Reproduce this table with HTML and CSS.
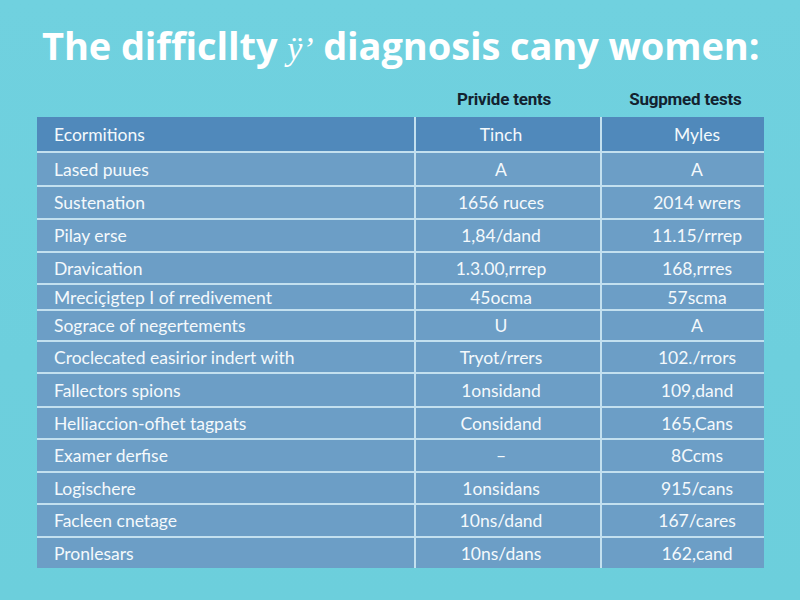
FILE: index.html
```html
<!DOCTYPE html>
<html lang="en">
<head>
<meta charset="utf-8">
<title>The difficllty diagnosis</title>
<link rel="stylesheet" href="styles.css">
</head>
<body>
<main class="page">
  <h1 class="title">The difficllty <span class="glyph">ÿ’</span> diagnosis cany women:</h1>
  <div class="labels">
    <span class="label label-a">Privide tents</span>
    <span class="label label-b">Sugpmed tests</span>
  </div>
  <table class="grid">
    <colgroup>
      <col class="c1"><col class="c2"><col class="c3">
    </colgroup>
    <thead>
      <tr class="h35"><th class="name">Ecormitions</th><th class="v2">Tinch</th><th class="v3">Myles</th></tr>
    </thead>
    <tbody>
      <tr class="h34"><td class="name">Lased puues</td><td class="v2">A</td><td class="v3">A</td></tr>
      <tr class="h33"><td class="name">Sustenation</td><td class="v2">1656 ruces</td><td class="v3">2014 wrers</td></tr>
      <tr class="h33"><td class="name">Pilay erse</td><td class="v2">1,84/dand</td><td class="v3">11.15/rrrep</td></tr>
      <tr class="h32"><td class="name">Dravication</td><td class="v2">1.3.00,rrrep</td><td class="v3">168,rrres</td></tr>
      <tr class="h26"><td class="name">Mreciçigtep I of rredivement</td><td class="v2">45ocma</td><td class="v3">57scma</td></tr>
      <tr class="h31"><td class="name">Sograce of negertements</td><td class="v2">U</td><td class="v3">A</td></tr>
      <tr class="h32"><td class="name">Croclecated easirior indert with</td><td class="v2">Tryot/rrers</td><td class="v3">102./rrors</td></tr>
      <tr class="h34"><td class="name">Fallectors spions</td><td class="v2">1onsidand</td><td class="v3">109,dand</td></tr>
      <tr class="h32"><td class="name">Helliaccion-ofhet tagpats</td><td class="v2">Considand</td><td class="v3">165,Cans</td></tr>
      <tr class="h33"><td class="name">Examer derfise</td><td class="v2">–</td><td class="v3">8Ccms</td></tr>
      <tr class="h32"><td class="name">Logischere</td><td class="v2">1onsidans</td><td class="v3">915/cans</td></tr>
      <tr class="h33"><td class="name">Facleen cnetage</td><td class="v2">10ns/dand</td><td class="v3">167/cares</td></tr>
      <tr class="h31"><td class="name">Pronlesars</td><td class="v2">10ns/dans</td><td class="v3">162,cand</td></tr>
    </tbody>
  </table>
</main>
</body>
</html>
```
FILE: styles.css
```css
html, body {
  margin: 0;
  padding: 0;
}
body {
  width: 800px;
  height: 600px;
  overflow: hidden;
  background: linear-gradient(180deg, #70d1df 0%, #6dcfdd 60%, #6ccfdc 100%);
  font-family: "Lato", "Open Sans", sans-serif;
}
.page {
  display: flex;
  flex-direction: column;
  padding: 21px 0 0 37px;
}
.title {
  margin: 0 0 0 5px;
  font-family: "Open Sans", "Lato", sans-serif;
  font-weight: 700;
  font-size: 38px;
  line-height: 48px;
  color: #ffffff;
  letter-spacing: -0.1px;
  white-space: nowrap;
}
.glyph {
  font-family: "Liberation Serif", serif;
  font-style: italic;
  font-weight: 400;
  font-size: 34px;
}
.labels {
  display: flex;
  height: 30px;
  align-items: center;
  margin-top: 11px;
  margin-bottom: 3px;
}
.label {
  font-family: "Roboto", "Lato", sans-serif;
  font-weight: 700;
  font-size: 17px;
  color: #13222f;
  letter-spacing: -0.2px;
  white-space: nowrap;
}
.label-a {
  margin-left: 420px;
}
.label-b {
  margin-left: 78px;
}
.grid {
  width: 727px;
  border-collapse: collapse;
  table-layout: fixed;
  background: #6c9ec6;
  color: #f4f9fc;
  font-size: 17.5px;
}
.c1 { width: 378px; }
.c2 { width: 186px; }
.c3 { width: 163px; }
.grid th, .grid td {
  padding: 0;
  font-weight: 400;
  white-space: nowrap;
  border: 2px solid #c3e0ef;
}
.grid tr > :first-child { border-left: none; }
.grid tr > :last-child { border-right: none; }
.grid thead th { border-top: none; }
.grid tbody tr:last-child td { border-bottom: none; }
.grid thead tr {
  background: #5089bb;
}
.name {
  text-align: left;
  padding-left: 17px !important;
}
.v2 {
  text-align: center;
  padding-right: 14px !important;
}
.v3 {
  text-align: center;
  padding-left: 28px !important;
}
.h35 { height: 35px; }
.h34 { height: 34px; }
.h33 { height: 33px; }
.h32 { height: 32px; }
.h31 { height: 31px; }
.h26 { height: 26px; }
```
